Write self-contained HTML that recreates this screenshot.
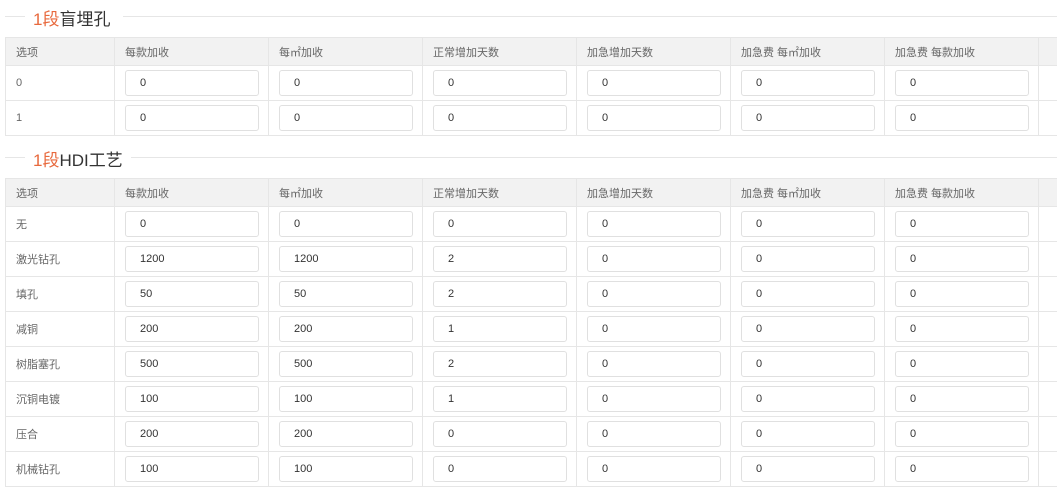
<!DOCTYPE html>
<html><head><meta charset="utf-8"><style>
body{margin:0;width:1057px;height:499px;overflow:hidden;background:#fff;font-family:"Liberation Sans","Noto Sans CJK SC",sans-serif;color:#555;position:relative}
.t{position:absolute;left:5px;height:20px;font-size:17px;color:#333}
.t .l1{position:absolute;left:0;top:10px;width:20px;border-top:1px solid #e6e6e6}
.t .l2{position:absolute;left:122px;top:10px;width:940px;border-top:1px solid #e6e6e6}
.t span.tx{position:absolute;left:28px;top:-1px;white-space:nowrap}
.t b{font-weight:normal;color:#e8693d}
table{position:absolute;left:5px;width:1063px;border-collapse:collapse;table-layout:fixed;font-size:11px}
td,th{border:1px solid #e6e6e6;padding:0 0 0 10px;text-align:left;font-weight:normal;color:#666;overflow:hidden}
th{background:#f2f2f2;height:27px}
td{height:34px}
.i{width:134px;height:26px;box-sizing:border-box;border:1px solid #e0e0e0;border-radius:3px;padding-left:14px;line-height:24px;color:#333}
</style></head><body>
<div class="t" style="top:6px"><div class="l1"></div><span class="tx"><b>1段</b>盲埋孔</span><div class="l2" style="left:118px"></div></div>
<table style="top:37px">
<colgroup><col style="width:109px"><col style="width:154px"><col style="width:154px"><col style="width:154px"><col style="width:154px"><col style="width:154px"><col style="width:154px"><col style="width:30px"></colgroup>
<tr><th>选项</th><th>每款加收</th><th>每㎡加收</th><th>正常增加天数</th><th>加急增加天数</th><th>加急费 每㎡加收</th><th>加急费 每款加收</th><th></th></tr>
<tr><td>0</td><td><div class="i">0</div></td><td><div class="i">0</div></td><td><div class="i">0</div></td><td><div class="i">0</div></td><td><div class="i">0</div></td><td><div class="i">0</div></td><td></td></tr>
<tr><td>1</td><td><div class="i">0</div></td><td><div class="i">0</div></td><td><div class="i">0</div></td><td><div class="i">0</div></td><td><div class="i">0</div></td><td><div class="i">0</div></td><td></td></tr>
</table>
<div class="t" style="top:147px"><div class="l1"></div><span class="tx"><b>1段</b>HDI工艺</span><div class="l2" style="left:126px"></div></div>
<table style="top:178px">
<colgroup><col style="width:109px"><col style="width:154px"><col style="width:154px"><col style="width:154px"><col style="width:154px"><col style="width:154px"><col style="width:154px"><col style="width:30px"></colgroup>
<tr><th>选项</th><th>每款加收</th><th>每㎡加收</th><th>正常增加天数</th><th>加急增加天数</th><th>加急费 每㎡加收</th><th>加急费 每款加收</th><th></th></tr>
<tr><td>无</td><td><div class="i">0</div></td><td><div class="i">0</div></td><td><div class="i">0</div></td><td><div class="i">0</div></td><td><div class="i">0</div></td><td><div class="i">0</div></td><td></td></tr>
<tr><td>激光钻孔</td><td><div class="i">1200</div></td><td><div class="i">1200</div></td><td><div class="i">2</div></td><td><div class="i">0</div></td><td><div class="i">0</div></td><td><div class="i">0</div></td><td></td></tr>
<tr><td>填孔</td><td><div class="i">50</div></td><td><div class="i">50</div></td><td><div class="i">2</div></td><td><div class="i">0</div></td><td><div class="i">0</div></td><td><div class="i">0</div></td><td></td></tr>
<tr><td>减铜</td><td><div class="i">200</div></td><td><div class="i">200</div></td><td><div class="i">1</div></td><td><div class="i">0</div></td><td><div class="i">0</div></td><td><div class="i">0</div></td><td></td></tr>
<tr><td>树脂塞孔</td><td><div class="i">500</div></td><td><div class="i">500</div></td><td><div class="i">2</div></td><td><div class="i">0</div></td><td><div class="i">0</div></td><td><div class="i">0</div></td><td></td></tr>
<tr><td>沉铜电镀</td><td><div class="i">100</div></td><td><div class="i">100</div></td><td><div class="i">1</div></td><td><div class="i">0</div></td><td><div class="i">0</div></td><td><div class="i">0</div></td><td></td></tr>
<tr><td>压合</td><td><div class="i">200</div></td><td><div class="i">200</div></td><td><div class="i">0</div></td><td><div class="i">0</div></td><td><div class="i">0</div></td><td><div class="i">0</div></td><td></td></tr>
<tr><td>机械钻孔</td><td><div class="i">100</div></td><td><div class="i">100</div></td><td><div class="i">0</div></td><td><div class="i">0</div></td><td><div class="i">0</div></td><td><div class="i">0</div></td><td></td></tr>
</table>
</body></html>
